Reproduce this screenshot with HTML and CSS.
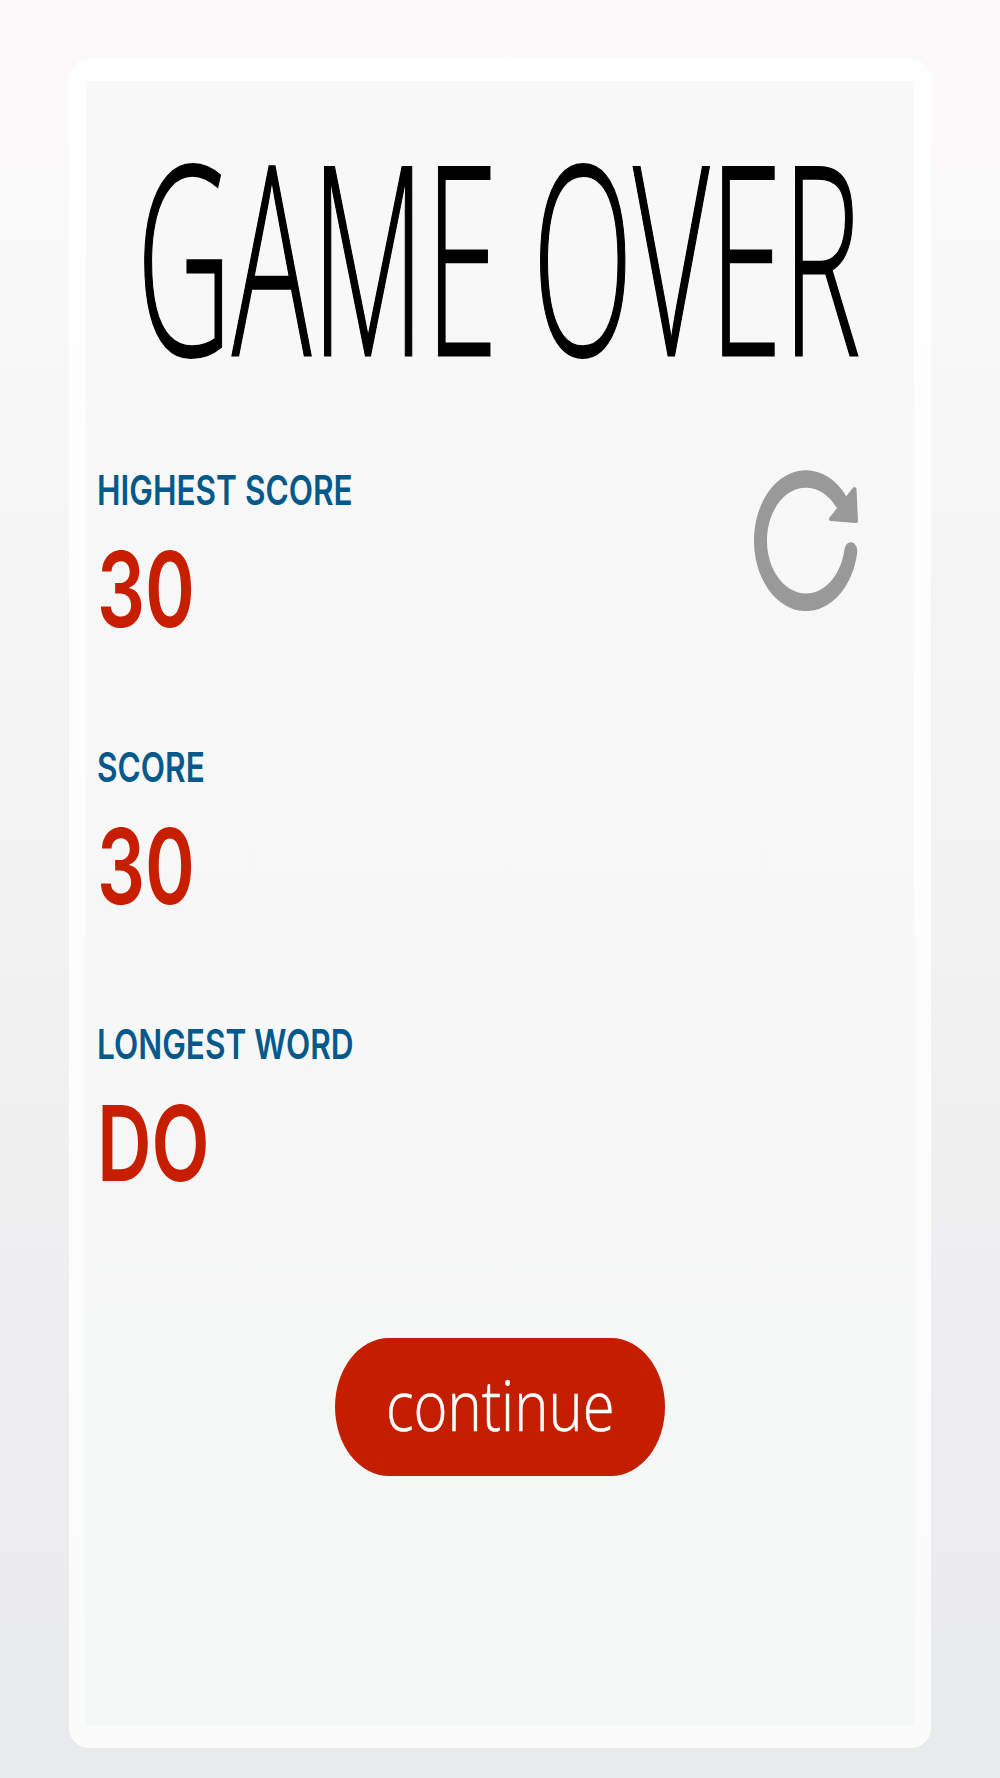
FILE: index.html
```html
<!DOCTYPE html>
<html>
<head>
  <title>Game Over</title>
  <link rel="stylesheet" href="styles.css">
</head>
<body>
  <main class="card">
    <div class="panel">
      <h1 class="title"><span>GAME OVER</span></h1>

      <section class="stat">
        <div class="stat_label"><span>HIGHEST SCORE</span></div>
        <div class="stat_value"><span>30</span></div>
        <svg class="replay_icon" viewBox="0 0 105 141" aria-hidden="true">
          <g transform="scale(1 1.35)">
            <path class="replay_ring" d="M97.8 60 A45.5 45.7 0 1 1 87.7 22.8"/>
          </g>
          <path class="replay_head" d="M101.5 19 L103 51 L78 49 Z"/>
        </svg>
      </section>

      <section class="stat">
        <div class="stat_label"><span>SCORE</span></div>
        <div class="stat_value"><span>30</span></div>
      </section>

      <section class="stat">
        <div class="stat_label"><span>LONGEST WORD</span></div>
        <div class="stat_value"><span>DO</span></div>
      </section>

      <button class="continue_btn"><span>continue</span></button>
    </div>
  </main>
</body>
</html>
```

FILE: styles.css
```css
* {
  box-sizing: border-box;
  margin: 0;
}

html, body {
  height: 100%;
}

body {
  padding: 59px 69px 30px;
  background: linear-gradient(#fcfafb, #e9eaec);
  font-family: "Inter", "Liberation Sans", sans-serif;
}

/* Outer white frame, inner panel has square corners */
.card {
  height: 1689px;
  padding: 22px 17px;
  background-color: rgba(255, 255, 255, .8);
  border-radius: 20px;
}

.panel {
  height: 100%;
  padding: 67px 11px 0;
  background: linear-gradient(#f8f8f8, #f5f6f6);
}

.title {
  height: 317px;
  padding-right: 3px;
  color: #000;
  font-family: "Open Sans", sans-serif;
  font-weight: 300;
  font-size: 134px;
  line-height: 210px;
  text-align: center;
  -webkit-text-stroke: 1px #000;
}

.title span {
  display: inline-block;
  white-space: nowrap;
  transform: scale(.985, 1.97);
}

.stat {
  position: relative;
  height: 277px;
}

.stat_label {
  height: 69px;
  color: #04598a;
  font-size: 41px;
  font-weight: 600;
  line-height: 50px;
}

.stat_value {
  color: #c81e00;
  font-size: 105px;
  font-weight: 600;
  line-height: 110px;
}

.stat_label span, .stat_value span {
  display: inline-block;
  white-space: nowrap;
  transform-origin: left center;
}

.stat_label span {
  transform: scaleX(.77);
}

.stat_value span {
  transform: scaleX(.72);
}

.replay_icon {
  position: absolute;
  top: 5px;
  left: 656px;
  width: 105px;
  height: 141px;
}

.replay_ring {
  fill: none;
  stroke: #999;
  stroke-width: 13;
  stroke-linecap: round;
}

.replay_head {
  fill: #999;
  stroke: #999;
  stroke-width: 4;
  stroke-linejoin: round;
}

.continue_btn {
  display: block;
  width: 330px;
  height: 138px;
  margin: 42px auto 0;
  padding: 0 0 6px;
  border: 0;
  border-radius: 54px / 69px;
  background-color: #c51d00;
  color: #fff;
  font-family: "Open Sans", sans-serif;
  font-weight: 300;
  font-size: 62px;
  -webkit-text-stroke: .5px #fff;
}

.continue_btn span {
  display: inline-block;
  transform: scale(.935, 1.14);
}
```
